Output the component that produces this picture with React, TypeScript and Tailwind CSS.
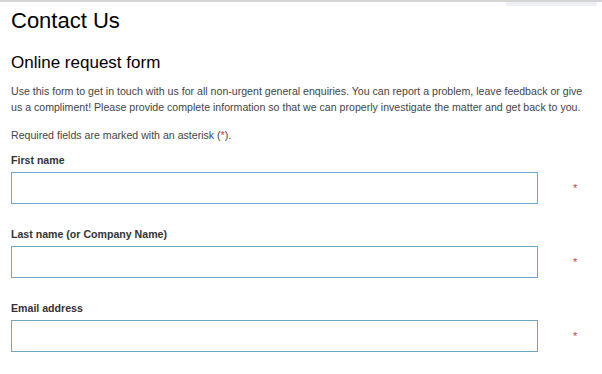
import React from "react";

const fields = [
  { label: "First name", id: "first-name" },
  { label: "Last name (or Company Name)", id: "last-name" },
  { label: "Email address", id: "email" },
];

function Field({ label, id, first }: { label: string; id: string; first?: boolean }) {
  return (
    <div className={first ? "mt-[10px]" : "mt-[23px]"}>
      <label htmlFor={id} className="block text-[10.6px] leading-[14px] font-bold text-[#333]">
        {label}
      </label>
      <div className="mt-[5px] flex items-center">
        <input
          id={id}
          type="text"
          className="w-[527px] h-[32px] border border-[#6ea7c4] bg-white outline-none"
        />
        <span className="ml-[35px] text-[11px] leading-none text-[#d23a3a]">*</span>
      </div>
    </div>
  );
}

export default function App() {
  return (
    <div className="relative w-[602px] h-[374px] overflow-hidden bg-white border-t-2 border-[#d4d4d4] font-['Liberation_Sans',Arial,sans-serif]">
      <div className="absolute top-0 left-[506px] w-[91px] h-[4px] bg-[#eef0f6]" />
      <div className="px-[11px] pt-[6px]">
        <h1 className="text-[22px] leading-[26px] text-black">Contact Us</h1>
        <h2 className="mt-[19px] text-[17px] leading-[20px] text-black">Online request form</h2>
        <p className="mt-[10px] text-[10.6px] leading-[16px] text-[#444]">
          Use this form to get in touch with us for all non-urgent general enquiries. You can report a problem, leave
          feedback or give us a compliment! Please provide complete information so that we can properly investigate the
          matter and get back to you.
        </p>
        <p className="mt-[12px] text-[10.6px] leading-[16px] text-[#444]">
          Required fields are marked with an asterisk (<span className="text-[#d23a3a]">*</span>).
        </p>
        {fields.map((f, i) => (
          <Field key={f.id} label={f.label} id={f.id} first={i === 0} />
        ))}
      </div>
    </div>
  );
}
